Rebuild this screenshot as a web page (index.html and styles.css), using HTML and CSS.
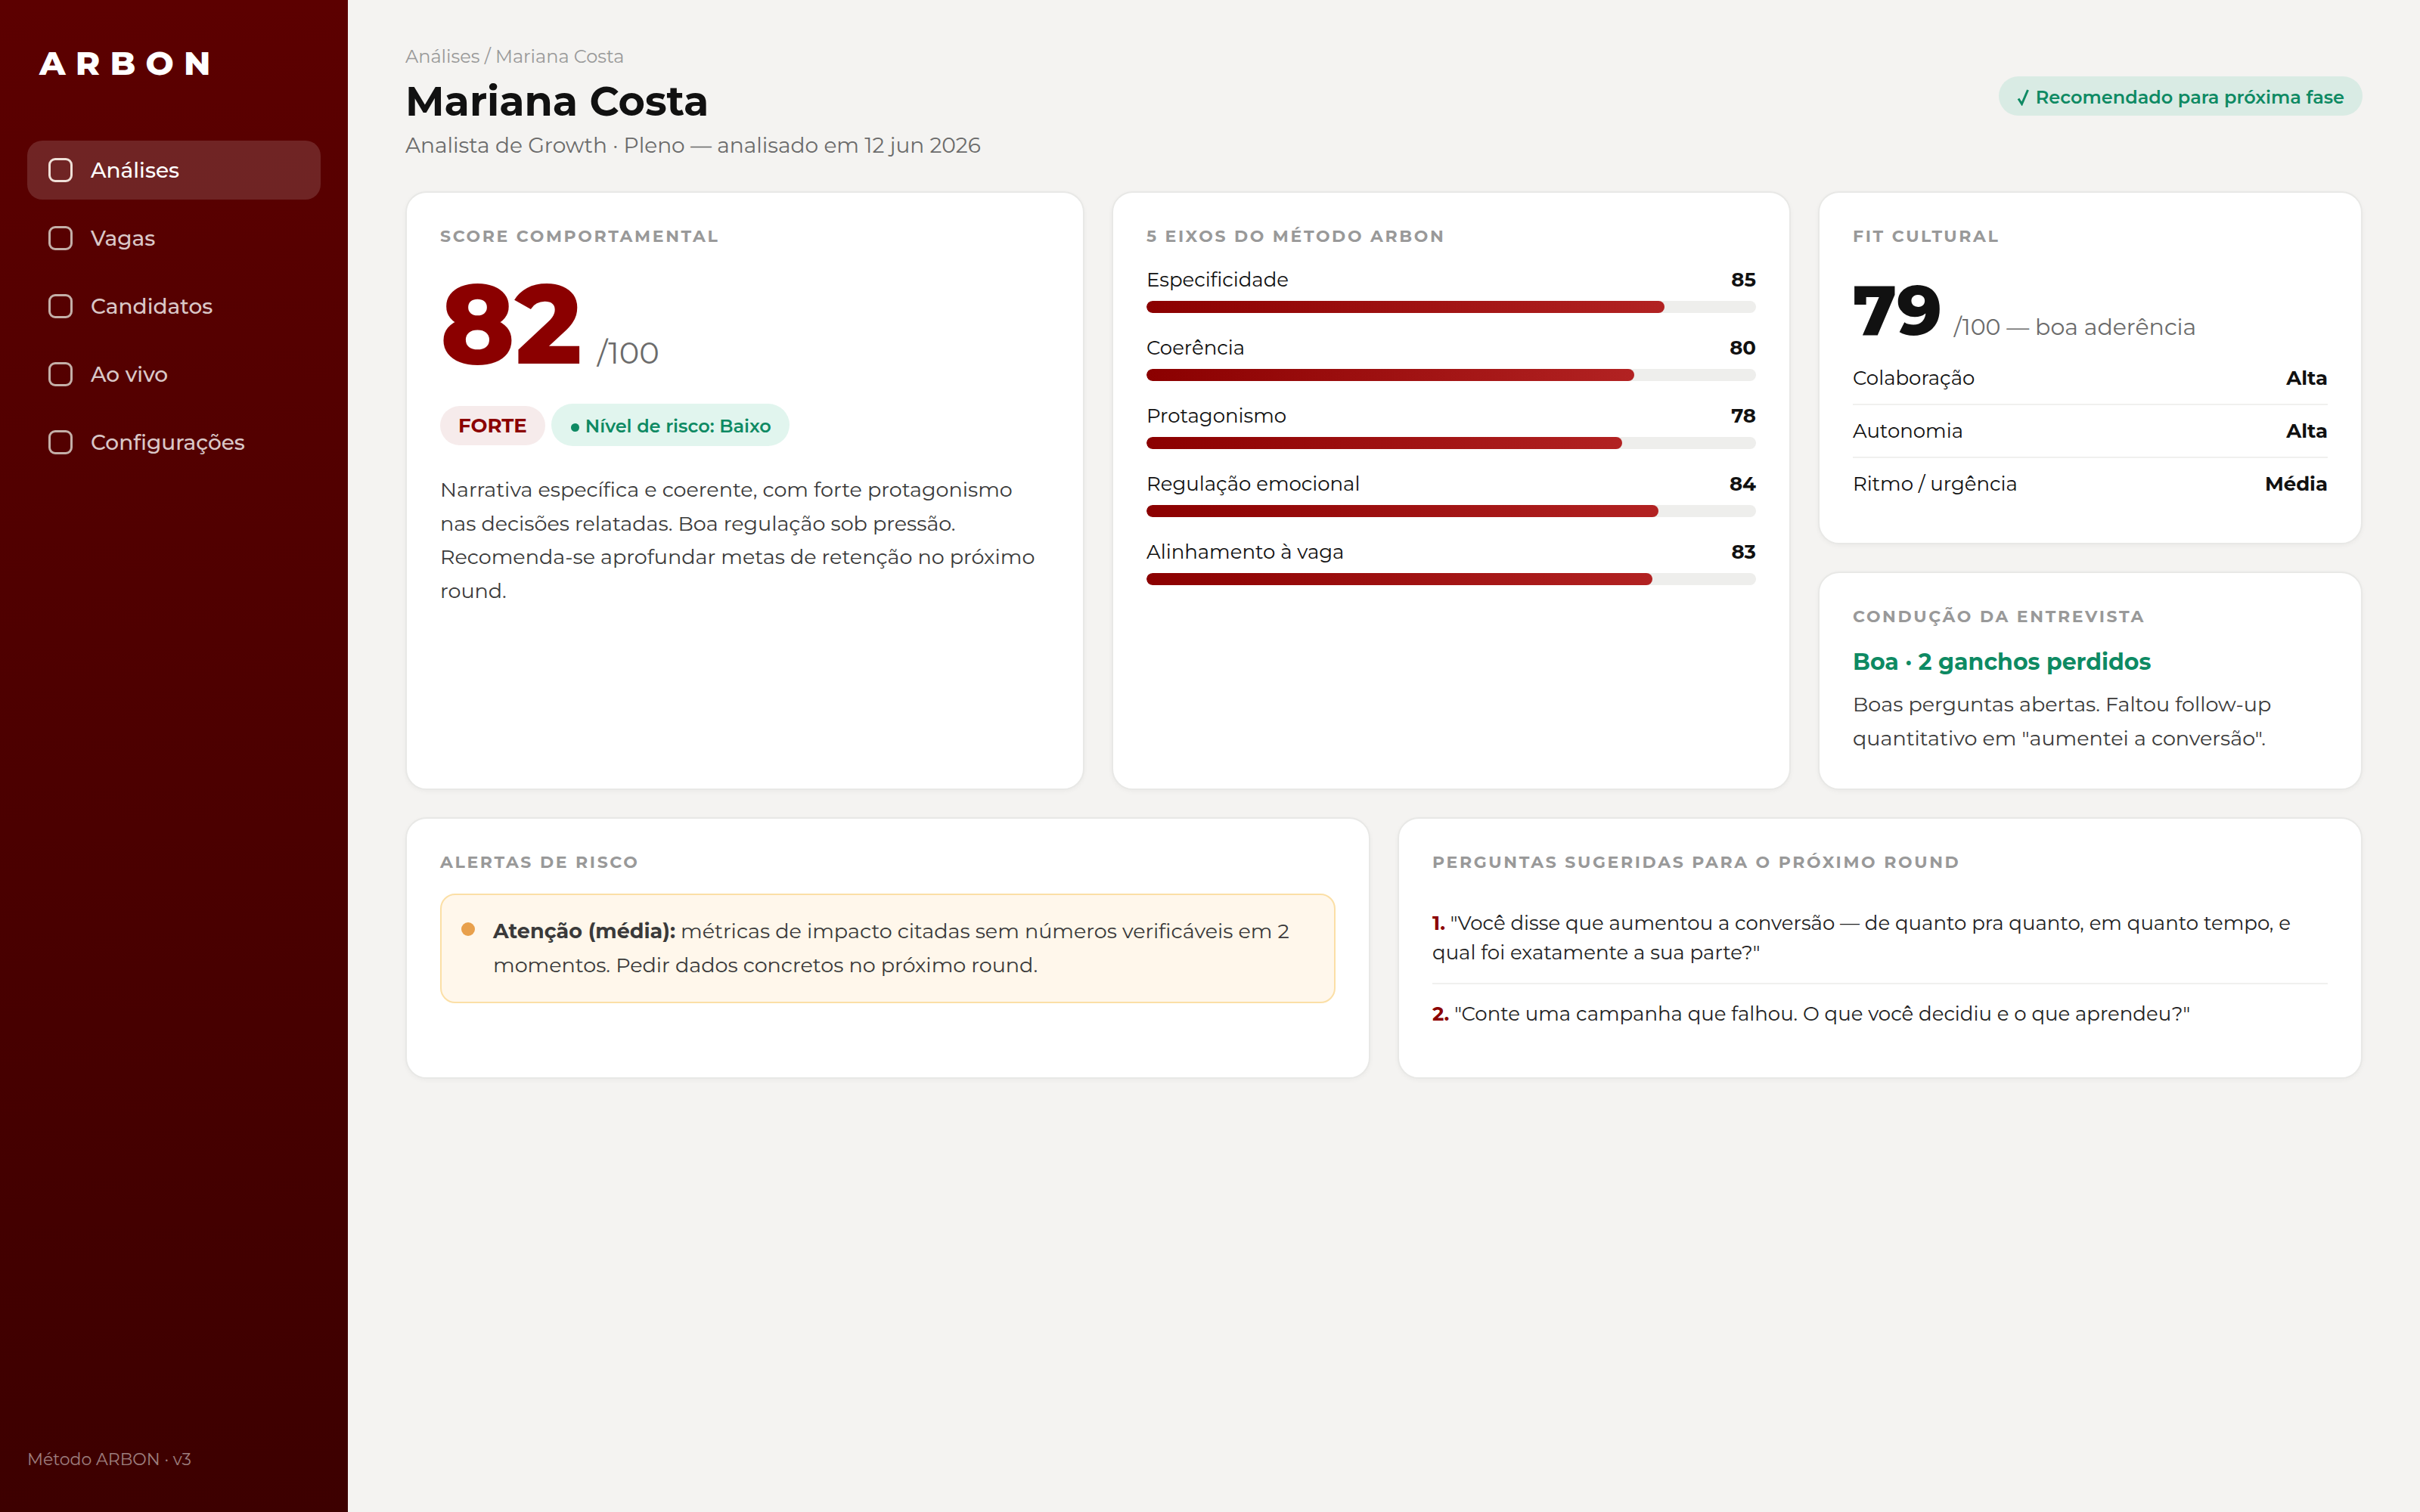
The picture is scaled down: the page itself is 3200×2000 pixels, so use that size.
FILE: index.html
```html
<!DOCTYPE html>
<html lang="pt-BR">
<head>
  <meta charset="UTF-8" />
  <meta name="viewport" content="width=device-width, initial-scale=1.0"/>
  <title>ARBON — Mariana Costa</title>
  <link rel="stylesheet" href="styles.css">
</head>
<body>

<div class="app">
  <!-- Menu lateral -->
  <aside class="sidebar">
    <div class="logo">ARBON</div>
    <nav class="nav">
      <a class="nav-item active"><span class="ico"></span><span>Análises</span></a>
      <a class="nav-item"><span class="ico"></span><span>Vagas</span></a>
      <a class="nav-item"><span class="ico"></span><span>Candidatos</span></a>
      <a class="nav-item"><span class="ico"></span><span>Ao vivo</span></a>
      <a class="nav-item"><span class="ico"></span><span>Configurações</span></a>
    </nav>
    <div class="foot">Método ARBON · v3</div>
  </aside>

  <main class="main">
    <header class="top">
      <div>
        <div class="crumb">Análises / Mariana Costa</div>
        <h1>Mariana Costa</h1>
        <div class="sub">Analista de Growth · Pleno — analisado em 12 jun 2026</div>
      </div>
      <div class="status"><svg class="check" viewBox="0 0 16 24"><path d="M2 14.5 6.5 21.5 14.5 3"/></svg><span>Recomendado para próxima fase</span></div>
    </header>

    <div class="grid">
      <!-- Score -->
      <section class="card">
        <h2>Score comportamental</h2>
        <div class="score"><b>82</b><span>/100</span></div>
        <div class="pills">
          <span class="pill strong">FORTE</span>
          <span class="pill risk"><i></i><span>Nível de risco: Baixo</span></span>
        </div>
        <p class="text">Narrativa específica e coerente, com forte protagonismo<br>nas decisões relatadas. Boa regulação sob pressão.<br>Recomenda-se aprofundar metas de retenção no próximo<br>round.</p>
      </section>

      <!-- Eixos -->
      <section class="card">
        <h2>5 eixos do Método ARBON</h2>
        <div class="axis">
          <div class="axis-head"><span>Especificidade</span><b>85</b></div>
          <div class="bar"><div class="fill" style="width:85%"></div></div>
        </div>
        <div class="axis">
          <div class="axis-head"><span>Coerência</span><b>80</b></div>
          <div class="bar"><div class="fill" style="width:80%"></div></div>
        </div>
        <div class="axis">
          <div class="axis-head"><span>Protagonismo</span><b>78</b></div>
          <div class="bar"><div class="fill" style="width:78%"></div></div>
        </div>
        <div class="axis">
          <div class="axis-head"><span>Regulação emocional</span><b>84</b></div>
          <div class="bar"><div class="fill" style="width:84%"></div></div>
        </div>
        <div class="axis">
          <div class="axis-head"><span>Alinhamento à vaga</span><b>83</b></div>
          <div class="bar"><div class="fill" style="width:83%"></div></div>
        </div>
      </section>

      <div class="stack">
        <!-- Fit cultural -->
        <section class="card fit">
          <h2>Fit cultural</h2>
          <div class="fit-score"><b>79</b><span>/100 — boa aderência</span></div>
          <div class="row"><span>Colaboração</span><b>Alta</b></div>
          <div class="row"><span>Autonomia</span><b>Alta</b></div>
          <div class="row"><span>Ritmo / urgência</span><b>Média</b></div>
        </section>

        <!-- Entrevista -->
        <section class="card interview">
          <h2>Condução da entrevista</h2>
          <div class="verdict">Boa · 2 ganchos perdidos</div>
          <p class="text">Boas perguntas abertas. Faltou follow-up<br>quantitativo em "aumentei a conversão".</p>
        </section>
      </div>
    </div>

    <div class="grid two">
      <section class="card">
        <h2>Alertas de risco</h2>
        <div class="alert">
          <span class="dot"></span>
          <p class="text"><b>Atenção (média):</b> métricas de impacto citadas sem números verificáveis em 2<br>momentos. Pedir dados concretos no próximo round.</p>
        </div>
      </section>

      <section class="card">
        <h2>Perguntas sugeridas para o próximo round</h2>
        <div class="questions">
          <p><b>1.</b> "Você disse que aumentou a conversão — de quanto pra quanto, em quanto tempo, e<br>qual foi exatamente a sua parte?"</p>
          <p><b>2.</b> "Conte uma campanha que falhou. O que você decidiu e o que aprendeu?"</p>
        </div>
      </section>
    </div>
  </main>
</div>

</body>
</html>
```
FILE: styles.css
```css
* {
  box-sizing: border-box;
  margin: 0;
  padding: 0;
}
body {
  font-family: Montserrat, Inter, "Open Sans", sans-serif;
  background: #f4f3f1;
  color: #111;
}
.app {
  display: flex;
  min-height: 2000px;
}

/* menu lateral */
.sidebar {
  width: 460px;
  padding: 56px 36px 55px;
  background: linear-gradient(180deg, #5c0000, #3d0000);
  display: flex;
  flex-direction: column;
}
.logo {
  padding: 0 16px;
  font-size: 44px;
  line-height: 54px;
  font-weight: 800;
  letter-spacing: 0.3em;
  color: #fff;
  margin-bottom: 76px;
}
.nav {
  display: flex;
  flex-direction: column;
  gap: 12px;
}
.nav-item {
  display: flex;
  align-items: center;
  gap: 24px;
  height: 78px;
  padding: 0 28px;
  border-radius: 20px;
  font-size: 28px;
  font-weight: 500;
  color: rgba(255, 255, 255, 0.8);
}
.nav-item.active {
  background: rgba(255, 255, 255, 0.14);
  color: #fff;
}
.ico {
  width: 32px;
  height: 32px;
  border: 3px solid #c4afa8;
  border-radius: 9px;
}
.active .ico {
  border-color: #efe0d8;
}
.foot {
  margin-top: auto;
  font-size: 22px;
  line-height: 28px;
  color: rgba(255, 255, 255, 0.5);
}

/* conteúdo */
.main {
  flex: 1;
  padding: 59px 76px;
}
.top {
  display: flex;
  justify-content: space-between;
  align-items: flex-start;
  height: 194px;
}
.crumb {
  font-size: 24px;
  line-height: 32px;
  color: #999;
}
h1 {
  font-size: 54px;
  line-height: 66px;
  margin-top: 10px;
  font-weight: 700;
}
.sub {
  font-size: 28px;
  line-height: 34px;
  margin-top: 8px;
  color: #6b6b6b;
}
.status {
  display: flex;
  align-items: center;
  gap: 9px;
  height: 52px;
  margin-top: 42px;
  padding: 2px 24px 0;
  border-radius: 26px;
  background: #d9ebe4;
  color: #0e8a63;
  font-size: 24px;
  font-weight: 600;
}
.check {
  width: 16px;
  height: 24px;
  fill: none;
  stroke: #0e8a63;
  stroke-width: 3;
}
.grid {
  display: grid;
  grid-template-columns: 1fr 1fr 720px;
  gap: 36px;
  height: 792px;
}
.grid.two {
  grid-template-columns: 1fr 1fr;
  height: 345px;
  margin-top: 36px;
}
.stack {
  display: flex;
  flex-direction: column;
  gap: 36px;
}
.card {
  background: #fff;
  border: 2px solid #e8e8e6;
  border-radius: 28px;
  padding: 44px;
  box-shadow: 0 2px 6px rgba(0, 0, 0, 0.04);
}
h2 {
  font-size: 22px;
  line-height: 27px;
  font-weight: 700;
  letter-spacing: 0.12em;
  text-transform: uppercase;
  color: #999;
}
.score {
  display: flex;
  align-items: baseline;
  gap: 20px;
  height: 144px;
  line-height: 144px;
  margin-top: 30px;
}
.score b {
  font-size: 148px;
  font-weight: 800;
  color: #8b0000;
}
.score span {
  font-size: 40px;
  color: #6b6b6b;
}
.pills {
  display: flex;
  align-items: center;
  gap: 8px;
  margin-top: 34px;
}
.pill {
  display: flex;
  align-items: center;
  gap: 8px;
  padding: 0 24px;
  border-radius: 28px;
}
.strong {
  height: 52px;
  margin-top: 2px;
  font-size: 26px;
  font-weight: 700;
  background: #f6ebeb;
  color: #8b0000;
}
.risk {
  height: 56px;
  padding-top: 2px;
  font-size: 24px;
  font-weight: 600;
  background: #e1f5ee;
  color: #0e8a63;
}
.risk i {
  width: 11px;
  height: 11px;
  margin: 4px 0 0 2px;
  border-radius: 50%;
  background: #0e8a63;
}
.text {
  font-size: 27px;
  line-height: 1.65;
  color: #3a3a3a;
  white-space: nowrap;
}
.pills + .text {
  margin-top: 36px;
}

/* eixos */
.axis {
  height: 90px;
}
h2 + .axis {
  margin-top: 28px;
}
.axis-head,
.row {
  display: flex;
  justify-content: space-between;
  font-size: 26px;
  line-height: 32px;
}
.bar {
  height: 16px;
  margin-top: 12px;
  border-radius: 8px;
  background: #eeeeec;
  overflow: hidden;
}
.fill {
  height: 16px;
  border-radius: 8px;
  background: linear-gradient(90deg, #8b0000, #b22222);
}

/* fit cultural */
.fit {
  height: 467px;
}
.fit-score {
  display: flex;
  align-items: baseline;
  gap: 16px;
  height: 92px;
  line-height: 92px;
  margin-top: 38px;
}
.fit-score b {
  font-size: 92px;
  font-weight: 800;
}
.fit-score span {
  font-size: 30px;
  color: #6b6b6b;
}
.row {
  height: 70px;
  padding-top: 18px;
  border-bottom: 2px solid #f0f0ee;
}
.fit-score + .row {
  margin-top: 10px;
}
.row:last-child {
  border-bottom: 0;
}
.interview {
  flex: 1;
}
.verdict {
  margin-top: 29px;
  font-size: 30px;
  line-height: 36px;
  font-weight: 700;
  color: #0e8a63;
}
.verdict + .text {
  margin-top: 16px;
}

/* alertas e perguntas */
.alert {
  display: flex;
  gap: 24px;
  margin-top: 28px;
  padding: 26px 26px 0;
  height: 145px;
  background: #fff7eb;
  border: 2px solid #fbdfa6;
  border-radius: 20px;
}
.dot {
  width: 18px;
  height: 18px;
  margin-top: 10px;
  border-radius: 50%;
  background: #e8a04c;
}
.questions {
  margin-top: 28px;
  font-size: 26px;
  line-height: 39px;
  color: #222;
  white-space: nowrap;
}
.questions p {
  padding: 20px 0;
}
.questions p + p {
  border-top: 2px solid #f0f0ee;
}
.questions b {
  color: #8b0000;
}
```
